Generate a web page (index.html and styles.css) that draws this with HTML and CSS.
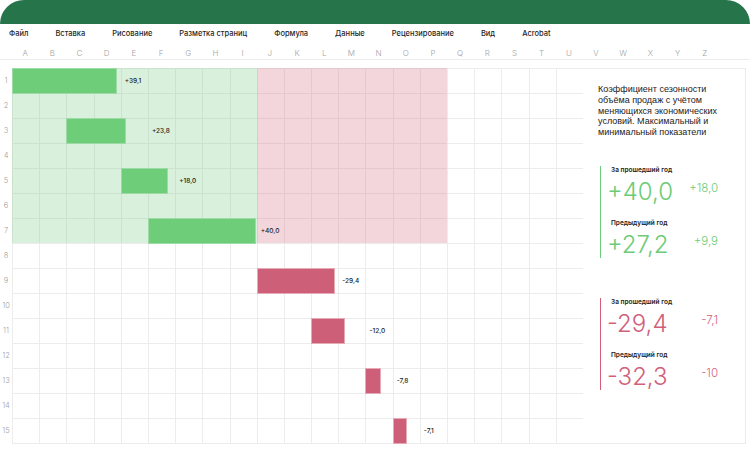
FILE: index.html
```html
<!DOCTYPE html>
<html lang="ru">
<head>
<meta charset="utf-8">
<title>Сезонность</title>
<link rel="stylesheet" href="styles.css">
</head>
<body>
<header class="topbar"></header>
<nav class="menu">
  <span>Файл</span><span>Вставка</span><span>Рисование</span><span>Разметка страниц</span><span>Формула</span><span>Данные</span><span>Рецензирование</span><span>Вид</span><span>Acrobat</span>
</nav>
<div class="colheads">
  <span>A</span><span>B</span><span>C</span><span>D</span><span>E</span><span>F</span><span>G</span><span>H</span><span>I</span><span>J</span><span>K</span><span>L</span><span>M</span><span>N</span><span>O</span><span>P</span><span>Q</span><span>R</span><span>S</span><span>T</span><span>U</span><span>V</span><span>W</span><span>X</span><span>Y</span><span>Z</span>
</div>
<main class="workspace">
  <div class="rownums">
    <span>1</span><span>2</span><span>3</span><span>4</span><span>5</span><span>6</span><span>7</span><span>8</span><span>9</span><span>10</span><span>11</span><span>12</span><span>13</span><span>14</span><span>15</span>
  </div>
  <div class="sheet">
    <div class="vlines"><i></i><i></i><i></i><i></i><i></i><i></i><i></i><i></i><i></i><i></i><i></i><i></i><i></i><i></i><i></i><i></i><i></i><i></i><i></i><i></i><i></i></div>
    <div class="zone zone-up"></div>
    <div class="zone zone-down"></div>

    <div class="bar bar-up" style="--r:1; --c:1; --w:105px"></div>
    <div class="val" style="--r:1; --c:5">+39,1</div>
    <div class="bar bar-up" style="--r:3; --c:3; --w:60px"></div>
    <div class="val" style="--r:3; --c:6">+23,8</div>
    <div class="bar bar-up" style="--r:5; --c:5; --w:47px"></div>
    <div class="val" style="--r:5; --c:7">+18,0</div>
    <div class="bar bar-up" style="--r:7; --c:6; --w:108px"></div>
    <div class="val" style="--r:7; --c:10">+40,0</div>

    <div class="bar bar-down" style="--r:9; --c:10; --w:78px"></div>
    <div class="val" style="--r:9; --c:13">-29,4</div>
    <div class="bar bar-down" style="--r:11; --c:12; --w:34px"></div>
    <div class="val" style="--r:11; --c:14">-12,0</div>
    <div class="bar bar-down" style="--r:13; --c:14; --w:16px"></div>
    <div class="val" style="--r:13; --c:15">-7,8</div>
    <div class="bar bar-down" style="--r:15; --c:15; --w:14px"></div>
    <div class="val" style="--r:15; --c:16">-7,1</div>
  </div>
  <aside class="panel">
    <p class="panel-text">Коэффициент сезонности объёма продаж с учётом меняющихся экономических условий. Максимальный и минимальный показатели</p>
    <section class="stat stat-up">
      <div class="stat-item">
        <div class="stat-label">За прошедший год</div>
        <div class="stat-row"><span class="stat-big">+40,0</span><span class="stat-small">+18,0</span></div>
      </div>
      <div class="stat-item">
        <div class="stat-label">Предыдущий год</div>
        <div class="stat-row"><span class="stat-big">+27,2</span><span class="stat-small">+9,9</span></div>
      </div>
    </section>
    <section class="stat stat-down">
      <div class="stat-item">
        <div class="stat-label">За прошедший год</div>
        <div class="stat-row"><span class="stat-big">-29,4</span><span class="stat-small">-7,1</span></div>
      </div>
      <div class="stat-item">
        <div class="stat-label">Предыдущий год</div>
        <div class="stat-row"><span class="stat-big">-32,3</span><span class="stat-small">-10</span></div>
      </div>
    </section>
  </aside>
</main>
</body>
</html>
```

FILE: styles.css
```css
* { box-sizing: border-box; }
html, body { margin: 0; padding: 0; background: #ffffff; }
body {
  width: 750px;
  height: 450px;
  overflow: hidden;
  font-family: "Inter", "Liberation Sans", sans-serif;
  color: #222;
}

.topbar {
  height: 24px;
  background: #267449;
  border-radius: 25px 25px 0 0;
}

.menu {
  display: flex;
  gap: 27px;
  height: 19px;
  padding-left: 9px;
  align-items: center;
  font-size: 7.5px;
  font-weight: 500;
  color: #1f1f1f;
}

.colheads {
  display: flex;
  padding: 3px 0 0 12px;
  height: 17px;
  border-bottom: 1px solid #ececec;
  font-size: 8px;
  font-weight: 300;
  color: #a3a3a3;
  line-height: 14px;
}
.colheads span {
  width: 27.19px;
  flex: none;
  text-align: center;
  padding-right: 1px;
}

.workspace {
  display: flex;
  margin-top: 8px;
  align-items: flex-start;
}

.rownums {
  width: 12px;
  display: flex;
  flex-direction: column;
  font-size: 7.5px;
  font-weight: 300;
  color: #a0a0a0;
}
.rownums span {
  height: 25px;
  line-height: 26px;
  text-align: center;
}

.sheet {
  width: 571px;
  height: 376px;
  display: grid;
  grid-template-columns: repeat(21, 1fr);
  grid-template-rows: repeat(15, 25px);
  background-image: linear-gradient(#ececec 1px, transparent 1px);
  background-size: 100% 25px;
  border-bottom: 1px solid #ececec;
}

.vlines {
  grid-area: 1 / 1 / -1 / -1;
  display: grid;
  grid-template-columns: repeat(21, 1fr);
}
.vlines i { border-left: 1px solid #ececec; }

.zone-up { grid-area: 1 / 1 / 8 / 10; background: rgba(110, 200, 120, 0.26); }
.zone-down { grid-area: 1 / 10 / 8 / 17; background: rgba(205, 95, 120, 0.26); }

.bar {
  grid-row: var(--r);
  grid-column: var(--c) / -1;
  width: var(--w);
  height: 26px;
  justify-self: start;
  align-self: start;
}
.bar-up { background: #6ecd78; border: 1px solid #9edaa5; }
.bar-down { background: #cd6078; border: 1px solid #e6aab7; }

.val {
  grid-row: var(--r);
  grid-column: var(--c);
  align-self: center;
  padding-left: 4px;
  padding-top: 1px;
  font-size: 6.5px;
  font-weight: 500;
  white-space: nowrap;
  color: #222;
}

.panel {
  width: 163px;
  height: 376px;
  border: 1px solid #ececec;
  border-left: none;
  padding: 15px 0 0 15px;
}

.panel-text {
  margin: 0;
  width: 138px;
  font-family: "Liberation Sans", "Inter", sans-serif;
  font-size: 9px;
  line-height: 10.8px;
  color: #222;
}

.stat {
  width: 118px;
  margin-left: 2px;
  padding-left: 6px;
  border-left: 1px solid currentColor;
}
.stat-up { color: #6ccb76; margin-top: 28px; }
.stat-down { color: #d0607a; margin-top: 40px; }

.stat-item + .stat-item { margin-top: 14px; }

.stat-label {
  padding-left: 4px;
  font-size: 6.5px;
  line-height: 8px;
  font-weight: 600;
  color: #222;
}

.stat-row {
  display: flex;
  justify-content: space-between;
  align-items: flex-start;
  margin-top: 5px;
}
.stat-big {
  font-size: 24px;
  line-height: 26px;
  font-weight: 300;
}
.stat-small {
  font-size: 11.5px;
  line-height: 12px;
  font-weight: 300;
  margin-top: 3px;
}
```
